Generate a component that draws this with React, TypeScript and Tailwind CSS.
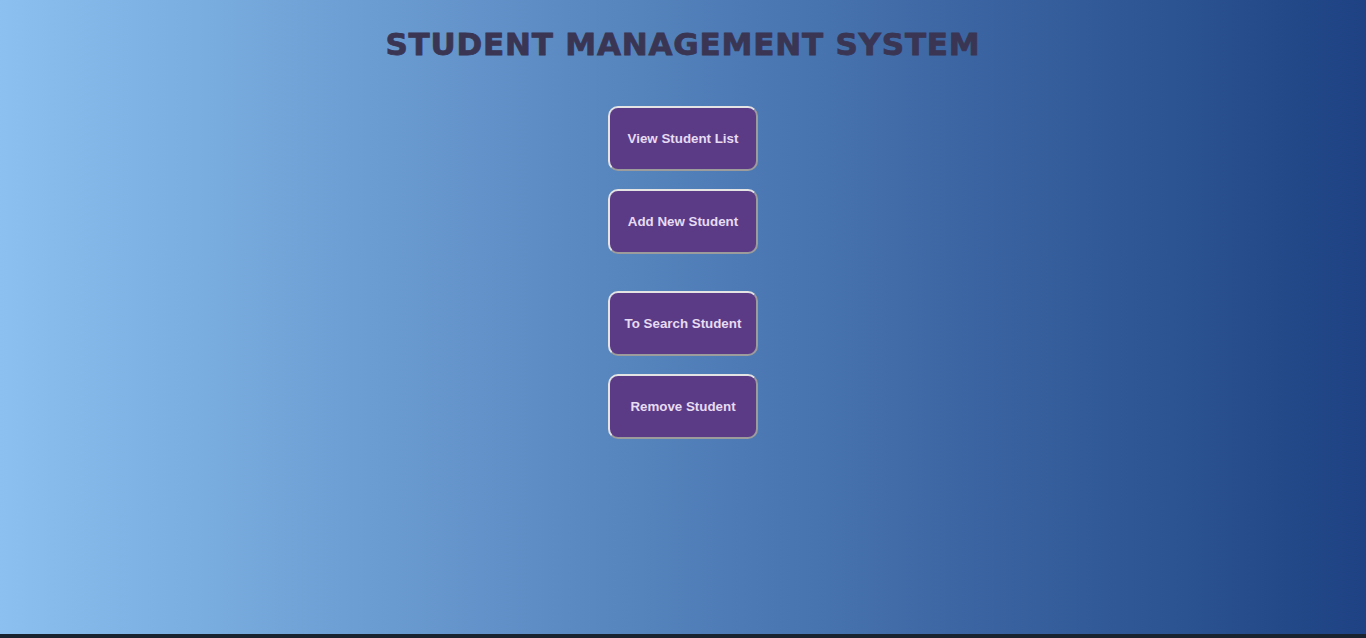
import React from "react";

const labels = ["View Student List", "Add New Student", "To Search Student", "Remove Student"];

function Btn({ label, className = "" }: { label: string; className?: string }) {
  return (
    <button
      className={
        "w-[150px] h-[65px] shrink-0 rounded-[10px] bg-[#5c3b86] text-[#e6dcf3] text-[13.333px] font-bold [font-family:'Liberation_Sans',Arial,sans-serif] border-2 border-t-[#e4e4e4] border-l-[#e4e4e4] border-r-[#9c9c9c] border-b-[#9c9c9c] " +
        className
      }
    >
      {label}
    </button>
  );
}

export default function App() {
  return (
    <div className="w-full h-[638px] bg-[#19232f] [font-family:'Liberation_Sans',Arial,sans-serif]">
      <div className="h-[634px] bg-gradient-to-r from-[#8bc0f0] to-[#1e4283] flex flex-col items-center">
        <h1 className="mt-[29px] text-[31px] leading-[31px] font-bold text-[#393552] tracking-[0.8px] [font-family:'DejaVu_Sans',sans-serif] [-webkit-text-stroke:0.8px_#393552]">
          STUDENT MANAGEMENT SYSTEM
        </h1>
        <Btn label={labels[0]} className="mt-[46px]" />
        <Btn label={labels[1]} className="mt-[18px]" />
        <Btn label={labels[2]} className="mt-[37px]" />
        <Btn label={labels[3]} className="mt-[18px]" />
      </div>
    </div>
  );
}
